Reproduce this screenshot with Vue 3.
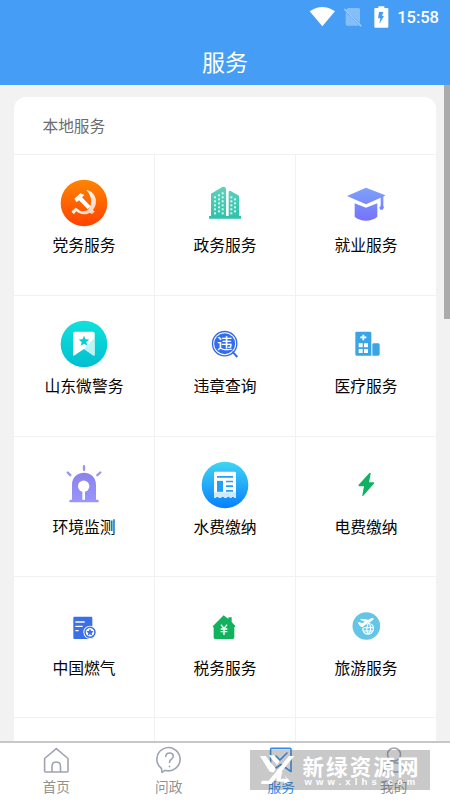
<script setup>
const services = [
  { name: '党务服务', icon: 'party', box: '43 10 180 180' },
  { name: '政务服务', icon: 'building', box: '465 10 180 180' },
  { name: '就业服务', icon: 'cap', box: '47 10 180 180' },
  { name: '山东微警务', icon: 'police', box: '43 13 180 180' },
  { name: '违章查询', icon: 'violation', box: '465 13 180 180' },
  { name: '医疗服务', icon: 'medical', box: '47 13 180 180' },
  { name: '环境监测', icon: 'alarm', box: '43 15.5 180 180' },
  { name: '水费缴纳', icon: 'water', box: '465 15.5 180 180' },
  { name: '电费缴纳', icon: 'power', box: '47 15.5 180 180' },
  { name: '中国燃气', icon: 'gas', box: '43 -12 180 180' },
  { name: '税务服务', icon: 'tax', box: '465 -12 180 180' },
  { name: '旅游服务', icon: 'travel', box: '47 -12 180 180' },
  { name: '', icon: '', box: '0 0 180 180' },
  { name: '', icon: '', box: '0 0 180 180' },
  { name: '', icon: '', box: '0 0 180 180' }
]
const windows = [[524, 82], [524, 94], [524, 106], [524, 118], [524, 130], [536, 76], [536, 88], [536, 100], [536, 112], [536, 124], [547, 70], [547, 82], [547, 94], [547, 106], [547, 118], [547, 130], [573, 82], [573, 94], [573, 106], [573, 118], [573, 130], [584, 88], [584, 100], [584, 112], [584, 124]]
const tabs = [
  { name: '首页', icon: 'home' },
  { name: '问政', icon: 'ask' },
  { name: '服务', icon: 'service', active: true },
  { name: '我的', icon: 'me' }
]
</script>

<template>
  <div class="screen">
    <header class="top">
      <div class="status">
        <svg class="status-icons" viewBox="50 0 260 105">
          <path d="M58 34Q96 8 134 34L96 79Z" fill="#fff" />
          <path d="M173 24H204Q209 24 209 29V69L167 29ZM166 36L207 77H171Q166 77 166 72Z" fill="#fff" opacity=".35" />
          <path d="M162 27L213 79" stroke="#fff" stroke-width="4" opacity=".5" />
          <path d="M264 19H282V24H291Q294 24 294 27V80Q294 83 291 83H255Q252 83 252 80V27Q252 24 255 24H264Z" fill="#fff" />
          <path d="M266 36H279L275 48H281L267 72L270 55H263Z" fill="#459df5" />
        </svg>
        <span class="clock">15:58</span>
      </div>
      <h1 class="title">服务</h1>
    </header>

    <main class="content">
      <section class="card">
        <h2 class="card-title">本地服务</h2>
        <div class="grid">
          <div v-for="(s, i) in services" :key="i" class="cell">
            <svg class="icon" :viewBox="s.box">
              <g v-if="s.icon === 'party'">
                <defs>
                  <linearGradient id="gParty" x1="0" y1="0" x2="0" y2="1"><stop offset="0" stop-color="#ff8500" /><stop offset="1" stop-color="#ff4200" /></linearGradient>
                  <linearGradient id="gSickle" x1="0" y1="0" x2="1" y2="1"><stop offset=".35" stop-color="#fff" /><stop offset="1" stop-color="#ffc8aa" /></linearGradient>
                </defs>
                <circle cx="133" cy="100" r="70" fill="url(#gParty)" />
                <path d="M140 61C157 64 168 76 169 94C169 107 165 115 160 120L165 126L157 133L150 129C137 137 120 134 110 125L103 133Q97 132 96 125L108 114L113 117C122 127 139 127 147 118C159 104 157 78 140 61Z" fill="url(#gSickle)" />
                <path d="M104 87L122 71L134 76L127 83L153 110L144 119L118 92L111 98Z" fill="#fff" />
              </g>
              <g v-else-if="s.icon === 'building'">
                <defs><linearGradient id="gBuild" x1="0" y1="0" x2="0" y2="1"><stop offset="0" stop-color="#5bd3bd" /><stop offset="1" stop-color="#2fc1aa" /></linearGradient></defs>
                <path d="M513 72L547 52Q557 50 558 58V139H566V66Q567 62 572 64L597 78V139H603V147H507V139H513Z" fill="url(#gBuild)" />
                <rect v-for="(w, n) in windows" :key="n" :x="w[0] - 2" :y="w[1] - 2" width="6" height="6" fill="#d9f8f1" />
              </g>
              <g v-else-if="s.icon === 'cap'">
                <defs><linearGradient id="gCap" x1="0" y1="50" x2="0" y2="153" gradientUnits="userSpaceOnUse"><stop offset="0" stop-color="#7da5fb" /><stop offset="1" stop-color="#7771fb" /></linearGradient></defs>
                <path d="M80 79L137 54L195 77L189 81V108L191 113L187 120H180L177 114L181 108V84L137 104Z" fill="url(#gCap)" />
                <path d="M103 101L137 114L171 101V141Q158 152 137 153Q115 152 103 141Z" fill="url(#gCap)" />
              </g>
              <g v-else-if="s.icon === 'police'">
                <defs><linearGradient id="gPol" x1="0" y1="0" x2="0" y2="1"><stop offset="0" stop-color="#10e2dc" /><stop offset="1" stop-color="#00bfd0" /></linearGradient></defs>
                <circle cx="133" cy="103" r="70" fill="url(#gPol)" />
                <path d="M105 66H160Q165 66 165 71V136Q164 139 160 137L133 118L105 137Q100 140 100 134V71Q100 66 105 66Z" fill="#fff" />
                <path d="M165 84V136Q164 139 160 137L133 118Z" fill="#a8edef" opacity=".75" />
                <path d="M133 78L137.5 88.5L149 89.5L140 97L143 108L133 102L123 108L126 97L117 89.5L128.5 88.5Z" fill="#05cfd1" />
              </g>
              <g v-else-if="s.icon === 'violation'">
                <circle cx="554" cy="102" r="36.5" fill="none" stroke="#346cdf" stroke-width="4" />
                <circle cx="554" cy="102" r="31.5" fill="#346cef" />
                <path d="M577 126L592 142" stroke="#346cdf" stroke-width="6" />
                <text class="violation-char" x="554" y="119">违</text>
              </g>
              <g v-else-if="s.icon === 'medical'">
                <path d="M109 66H149Q153 66 153 70V138H109Q105 138 105 134V70Q105 66 109 66ZM156 105Q156 101 160 101H173Q178 101 178 105V134Q178 138 173 138H156Z" fill="#39a5e4" />
                <path d="M129 75V92M120 83H138" stroke="#fff" stroke-width="5.5" />
                <path d="M115 101H127V113H115ZM131 101H143V113H131ZM115 118H127V130H115ZM131 118H143V130H131Z" fill="#fff" />
              </g>
              <g v-else-if="s.icon === 'alarm'">
                <defs><linearGradient id="gAlarm" x1="0" y1="0" x2="0" y2="1"><stop offset="0" stop-color="#8a82ea" /><stop offset="1" stop-color="#9a96ff" /></linearGradient></defs>
                <path d="M97 150V105C97 57 169 57 169 105V150H174Q177 150 177 154V157H89V154Q89 150 93 150Z" fill="url(#gAlarm)" />
                <path d="M133 49V60M84 68L92 76M182 68L173 76" stroke="#9a94f4" stroke-width="7" stroke-linecap="round" />
                <circle cx="132" cy="109" r="17" fill="#fff" />
                <path d="M132 120V150" stroke="#fff" stroke-width="8" />
              </g>
              <g v-else-if="s.icon === 'water'">
                <defs><linearGradient id="gWater" x1="0" y1="0" x2="0" y2="1"><stop offset="0" stop-color="#3fd6f3" /><stop offset="1" stop-color="#087fff" /></linearGradient></defs>
                <circle cx="555" cy="105.5" r="70" fill="url(#gWater)" />
                <path d="M522 70Q522 66 526 66H584Q588 66 588 70V144H583Q579 137 575 143L570 144Q565 136 560 144H553Q548 136 543 144H537Q532 137 527 144H522Z" fill="#fff" />
                <path d="M522 127H588V144H583Q579 137 575 143L570 144Q565 136 560 144H553Q548 136 543 144H537Q532 137 527 144H522Z" fill="#cdeaff" />
                <path d="M531 81H579M558 95H579M558 109H579M558 123H579" stroke="#249ff8" stroke-width="5" />
                <rect x="531" y="93" width="18" height="33" fill="#249ff8" />
              </g>
              <path v-else-if="s.icon === 'power'" d="M148 69Q151 68 151 72L146 97H160Q163 98 161 101L129 138Q125 141 126 136L131 109H116Q113 108 115 105Z" fill="#10b163" />
              <g v-else-if="s.icon === 'gas'">
                <path d="M104 50H154Q158 50 158 54V117H104Q101 117 101 113V54Q101 50 104 50Z" fill="#3c6ee5" />
                <path d="M107 66H135M107 79H129M107 92H117" stroke="#fff" stroke-width="4" />
                <circle cx="151" cy="97" r="20" fill="#fff" />
                <circle cx="151" cy="97" r="15" fill="none" stroke="#3c6ee5" stroke-width="4.5" />
                <path d="M151 86L154.5 93L162 94L156 99.5L158 107L151 103L144 107L146 99.5L140 94L147.5 93Z" fill="#3c6ee5" />
              </g>
              <g v-else-if="s.icon === 'tax'">
                <path d="M519 78L551 46L565 57V52H575V66L586 78Q587 81 583 81V112Q583 117 578 117H525Q521 117 521 112V82Q516 82 519 78Z" fill="#10b25d" />
                <path d="M543 74L552 86L561 74M552 86V105M542 87H562M542 95H562" fill="none" stroke="#fff" stroke-width="4" />
              </g>
              <g v-else-if="s.icon === 'travel'">
                <circle cx="138" cy="78" r="41.5" fill="#65c5e7" />
                <path d="M112 68L117 66L125 70L134 65L119 59L123 56L144 59L154 54Q160 53 160 57Q159 60 153 64L139 72L128 80Q122 82 119 78Z" fill="#fff" />
                <path d="M128 83Q126 94 133 99Q142 106 153 99Q162 91 158 78L153 72M151 69Q144 69 140 75M130 83H159M129 93H158M143 75Q135 87 143 101M148 72Q155 88 145 101" fill="none" stroke="#fff" stroke-width="3.5" />
              </g>
            </svg>
            <span class="label">{{ s.name }}</span>
          </div>
        </div>
      </section>
      <div class="scrollbar"></div>
    </main>

    <nav class="tabs">
      <div v-for="t in tabs" :key="t.name" class="tab" :class="{ active: t.active }">
        <svg class="tab-icon" viewBox="0 0 30 30" fill="none" stroke="currentColor" stroke-width="1.6" stroke-linejoin="round" stroke-linecap="round">
          <path v-if="t.icon === 'home'" d="M3.6 12.5L15.3 2.7L27 12.5V25Q27 26 26 26H4.6Q3.6 26 3.6 25ZM11 26V20.5Q11 16 15.2 16Q19.5 16 19.5 20.5V26" />
          <g v-else-if="t.icon === 'ask'">
            <path d="M7.5 22.5A11.6 11.6 0 1 1 11 24.3L8 26.300Z" />
            <path d="M11.8 10.5Q11.800 7 15.500 7Q19.300 7 19.300 10.300Q19.300 12.200 17.100 13.500Q15.500 14.500 15.500 16.500M15.500 20.300V20.700" />
          </g>
          <path v-else-if="t.icon === 'service'" d="M5.5 2.400H24Q25 2.400 25 3.400V25.600L15 18.500L4.600 25.600V3.400Q4.600 2.400 5.500 2.400ZM10 10L14 14L21 7" />
          <g v-else>
            <circle cx="15" cy="8.5" r="6.5" />
            <path d="M4.500 26Q5 17 15 16.500Q25 17 25.500 26Z" />
          </g>
        </svg>
        <span class="tab-label">{{ t.name }}</span>
      </div>
      <div class="watermark">
        <svg class="mark-logo" viewBox="90 132 105 96" fill="#fff">
          <path d="M90 138H107L138 177L131 187L120 187Z" />
          <path d="M116 136H132L148 154L141 165Z" />
          <path d="M177 138H193L124 222H93L95 212H116Z" />
          <path d="M143 178L157 186L152 206H170L162 194L180 214L161 222L164 215H139Z" />
        </svg>
        <div class="mark-text">
          <span class="mark-name">新绿资源网</span>
          <span class="mark-url">www.xlhs.com</span>
        </div>
      </div>
    </nav>
  </div>
</template>

<style>
body {
  margin: 0;
  overflow: hidden;
}
</style>

<style scoped>
.screen {
  width: 450px;
  height: 800px;
  display: flex;
  flex-direction: column;
  overflow: hidden;
  background: #f2f2f2;
  font-family: "Noto Sans CJK SC", sans-serif;
}
.top {
  height: 85px;
  flex: none;
  background: #459df5;
  color: #fff;
}
.status {
  height: 35px;
  display: flex;
  justify-content: flex-end;
  padding-right: 11px;
}
.status-icons {
  width: 86.7px;
  height: 35px;
}
.clock {
  width: 45px;
  font: 500 16.5px/35px Roboto, sans-serif;
  text-align: right;
}
.title {
  margin: 0;
  font-size: 23px;
  font-weight: 400;
  line-height: 53px;
  text-align: center;
}
.content {
  flex: 1;
  min-height: 0;
  overflow: hidden;
  display: flex;
  justify-content: space-between;
  padding: 12px 0 0 14px;
}
.card {
  width: 422px;
  height: 780px;
  flex: none;
  background: #fff;
  border-radius: 12px 12px 0 0;
}
.card-title {
  margin: 0;
  padding-left: 28.5px;
  height: 57px;
  font-size: 15.7px;
  font-weight: 400;
  line-height: 58px;
  color: #6c6c70;
}
.grid {
  display: grid;
  grid-template-columns: 140px 141px 141px;
  grid-auto-rows: 140.8px;
}
.cell {
  box-sizing: border-box;
  border-top: 1px solid #f1f1f1;
  border-left: 1px solid #f1f1f1;
  padding-top: 18.3px;
  display: flex;
  flex-direction: column;
  align-items: center;
}
.cell:nth-child(3n + 1) {
  border-left: 0;
}
.icon {
  width: 60px;
  height: 60px;
  flex: none;
}
.violation-char {
  font-size: 46px;
  font-weight: 500;
  text-anchor: middle;
  fill: #fff;
}
.label {
  font-size: 15.8px;
  line-height: 24px;
  color: #050505;
}
.scrollbar {
  width: 6px;
  height: 234px;
  margin-top: -12px;
  background: #ababab;
}
.tabs {
  position: relative;
  box-sizing: border-box;
  flex: none;
  height: 59px;
  border-top: 2px solid #c7c7c7;
  background: #fff;
  display: flex;
}
.tab {
  flex: 1;
  display: flex;
  flex-direction: column;
  align-items: center;
  padding-top: 3px;
  color: #a0a3b2;
}
.tab-icon {
  width: 30px;
  height: 30px;
}
.tab-label {
  font-size: 13.7px;
  line-height: 21px;
  color: #929292;
}
.tab.active,
.tab.active .tab-label {
  color: #2f8df0;
}
.watermark {
  position: absolute;
  left: 250px;
  top: 7px;
  width: 180px;
  height: 40px;
  display: flex;
  background: rgba(90, 90, 90, 0.33);
  color: #fff;
}
.mark-logo {
  width: 35px;
  height: 32px;
  margin: 4px 7.5px 0 10px;
}
.mark-text {
  display: flex;
  flex-direction: column;
}
.mark-name {
  font-size: 21.5px;
  font-weight: 700;
  line-height: 31px;
  height: 27px;
  letter-spacing: 2.1px;
  white-space: nowrap;
}
.mark-url {
  padding-left: 2px;
  font: 700 9.5px/10px "Liberation Sans", sans-serif;
  letter-spacing: 4.1px;
  white-space: nowrap;
}
</style>
